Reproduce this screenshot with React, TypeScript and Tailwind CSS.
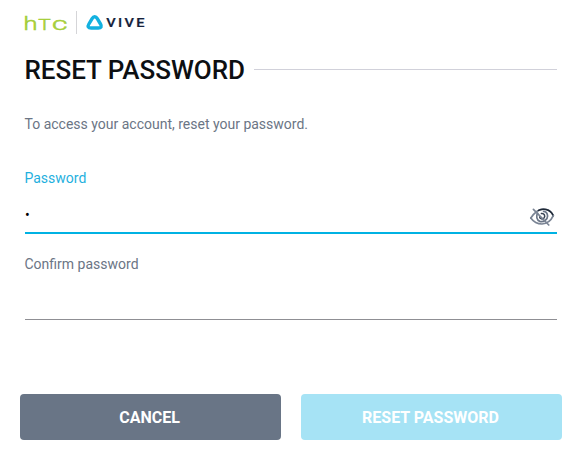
import { useState } from 'react';

function HtcLogo() {
  return (
    <svg width="44" height="20" viewBox="0 0 44 20" className="block overflow-visible" aria-label="htc">
      <g fill="#a6ce39" stroke="#a6ce39" strokeWidth="0.55" fontFamily="Roboto, sans-serif" fontWeight="300">
        <text transform="translate(-0.4 16.7) scale(1.34 1)" fontSize="19">h</text>
        <text transform="translate(14.2 16.7) scale(1.45 1)" fontSize="14.4" style={{ textTransform: 'uppercase' }}>t</text>
        <text transform="translate(28.1 16.5) scale(1.58 1)" fontSize="19">c</text>
      </g>
    </svg>
  );
}

function ViveLogo() {
  return (
    <svg width="62" height="18" viewBox="0 0 62 18" className="block overflow-visible" aria-label="VIVE">
      <path
        d="M8.7 3.7 C7.3 3.7 6.8 4.4 6.1 5.6 L2.9 11 C2.1 12.3 1.8 12.9 2.3 13.9 C2.9 15 3.8 15 5.1 15 H12.3 C13.6 15 14.5 15 15.1 13.9 C15.6 12.9 15.3 12.3 14.5 11 L11.3 5.6 C10.6 4.4 10.1 3.7 8.7 3.7 Z"
        fill="none"
        stroke="#13b1e0"
        strokeWidth="3.4"
        strokeLinejoin="round"
      />
      <text
        transform="translate(20.2 14) scale(1.22 1)"
        fill="#14213a"
        stroke="#14213a"
        strokeWidth="0.2"
        fontFamily="Roboto, sans-serif"
        fontSize="12"
        fontWeight="500"
        letterSpacing="1.9"
      >
        VIVE
      </text>
    </svg>
  );
}

function EyeOffIcon() {
  return (
    <svg width="26" height="20" viewBox="0 0 26 20" fill="none" strokeLinecap="round">
      <path d="M1.8 11 C5.5 5.6 8.8 2.6 14 2.2 C19 2 22.4 4.6 24.3 8.6" stroke="#7a8494" strokeWidth="1.7" />
      <path d="M9.5 3.4 C13 1.6 21 1 24.3 8.6" stroke="#1f2937" strokeWidth="1.6" />
      <path d="M1.8 11 C4.5 14.8 8 17 13 17 C18.5 16.6 22 13.6 24.3 8.6" stroke="#7a8494" strokeWidth="1.7" />
      <path d="M8.6 6.2 C6.9 9 7.6 13 10.8 14.4 C14.6 15.6 18.6 12.6 18.6 9 C18.4 6.4 17 4.6 14.6 4.4" stroke="#6b7687" strokeWidth="1.7" />
      <path d="M12.4 6.6 C15.4 6.2 16.6 9 15 11 C13.6 12.6 10.6 12 10.6 9.8" stroke="#374151" strokeWidth="1.5" />
      <path d="M4.4 2.4 L19.8 18" stroke="#7a8494" strokeWidth="1.7" />
    </svg>
  );
}

export default function App() {
  const [password, setPassword] = useState('1');
  const [confirm, setConfirm] = useState('');
  const [visible, setVisible] = useState(false);

  return (
    <div className="h-[455px] w-[570px] overflow-hidden bg-white font-['Roboto',sans-serif] text-[#14171a]">
      {/* Brand header */}
      <header className="flex h-[35px] items-start pl-[24px] pt-[11px]">
        <div className="pt-[2px]">
          <HtcLogo />
        </div>
        <div className="ml-[8px] h-[23px] w-px bg-[#d5d5d8]" />
        <div className="ml-[9px] pt-[2px]">
          <ViveLogo />
        </div>
      </header>

      <main className="pl-[25px] pr-[13px]">
        <div className="-ml-[0.5px] flex h-[69px] items-center gap-[9px]">
          <h1 className="mt-px whitespace-nowrap text-[26px] font-medium leading-[30px] tracking-[-0.04px] text-[#0d0f12]">RESET PASSWORD</h1>
          <div className="h-px flex-1 bg-[#d1d1da]" />
        </div>

        <p className="-ml-[0.5px] mt-[10px] text-sm text-[#6b7585]">To access your account, reset your password.</p>

        {/* Password */}
        <div className="mt-[34px]">
          <label htmlFor="password" className="-ml-[0.5px] block text-sm text-[#1fb0de]">
            Password
          </label>
          <div className="flex h-[46px] items-center border-b-2 border-[#00b2e3]">
            <input
              id="password"
              type={visible ? 'text' : 'password'}
              value={password}
              onChange={(e) => setPassword(e.target.value)}
              className="mt-[10px] min-w-0 flex-1 text-sm text-black outline-none"
            />
            <button type="button" onClick={() => setVisible(!visible)} className="mr-[2px] mt-[13px]" aria-label="Toggle password">
              <EyeOffIcon />
            </button>
          </div>
        </div>

        {/* Confirm password */}
        <div className="mt-[20px]">
          <label htmlFor="confirm" className="-ml-[0.5px] block text-sm text-[#6b7585]">
            Confirm password
          </label>
          <input
            id="confirm"
            type="password"
            value={confirm}
            onChange={(e) => setConfirm(e.target.value)}
            className="block h-[46px] w-full border-b border-[#8f8f94] text-sm outline-none"
          />
        </div>
      </main>

      <div className="mt-[74px] grid grid-cols-2 gap-[20px] pl-[20px] pr-[8px]">
        <button type="button" className="h-[46px] rounded bg-[#697586] pr-[2px] pt-[2px] font-bold text-white">
          CANCEL
        </button>
        <button type="button" className="h-[46px] rounded bg-[#a6e3f5] pr-[2px] pt-[2px] font-bold text-white">
          RESET PASSWORD
        </button>
      </div>
    </div>
  );
}
